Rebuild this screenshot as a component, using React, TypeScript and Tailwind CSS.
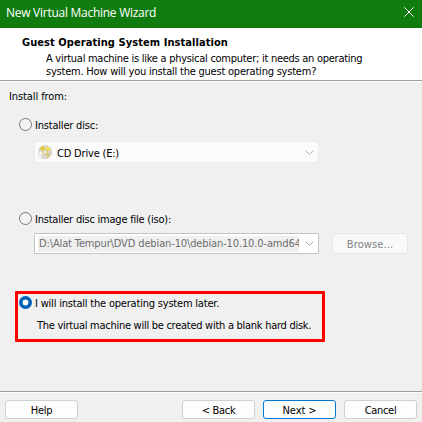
import type { ReactNode } from "react";

function Radio({ checked = false }: { checked?: boolean }) {
  return (
    <svg className="size-[13px] shrink-0" viewBox="0 0 13 13">
      {checked ? (
        <>
          <circle cx="6.5" cy="6.5" r="6.5" fill="#005fb8" />
          <circle cx="6.5" cy="6.5" r="2.9" fill="#fff" />
        </>
      ) : (
        <circle cx="6.5" cy="6.5" r="6" fill="#f3f3f3" stroke="#777" strokeWidth="1" />
      )}
    </svg>
  );
}

function Chevron({ color }: { color: string }) {
  return (
    <svg className="h-[5px] w-[9px] shrink-0" viewBox="0 0 9 5" fill="none" stroke={color}>
      <path d="M0.5 0.5 L4.5 4.3 L8.5 0.5" />
    </svg>
  );
}

function Disc() {
  return (
    <svg className="size-[14px] shrink-0" viewBox="0 0 14 14">
      <circle cx="7" cy="7" r="6.6" fill="#d8d8d8" stroke="#c4c4c4" strokeWidth="0.6" />
      <path d="M7 7 L1.6 4 A6.2 6.2 0 0 1 6.2 0.8 Z" fill="#e3c840" />
      <path d="M7 7 L8.5 0.9 A6.2 6.2 0 0 1 13 5.5 Z" fill="#efdc62" />
      <path d="M7 7 L12.8 8.4 A6.2 6.2 0 0 1 8.6 13 Z" fill="#d9ca86" />
      <path d="M7 7 L1 6.2 A6.2 6.2 0 0 0 2.8 11.5 Z" fill="#f3f3f3" />
      <circle cx="7" cy="7" r="2.5" fill="#f8f8f8" stroke="#d1b83d" strokeWidth="0.9" />
      <circle cx="7" cy="7" r="0.9" fill="#c9c9c9" />
      <path d="M0.5 9 h3.5 v4.5 h-3 z" fill="#e9e9e9" />
    </svg>
  );
}

function Button({ children, className = "border-[#d0d0d0]" }: { children: ReactNode; className?: string }) {
  return (
    <button className={`flex h-[19px] w-[73px] justify-center rounded-[3px] border bg-[#fdfdfd] pt-[3px] leading-[13px] ${className}`}>
      {children}
    </button>
  );
}

export default function App() {
  return (
    <div className="flex h-[422px] w-[422px] flex-col overflow-hidden whitespace-pre bg-[#f0f0f0] font-['DejaVu_Sans_Condensed','DejaVu_Sans',sans-serif] text-[11px] leading-[13px] text-black">
      <header className="flex h-[28px] shrink-0 justify-between bg-[#107c10] pl-[6px] pr-[8px] text-white">
        <h1 className="pt-[4px] font-['Open_Sans',sans-serif] text-[12px] leading-[17px] tracking-[-0.27px]">New Virtual Machine Wizard</h1>
        <svg className="mt-[7px] size-[10px]" viewBox="0 0 10 10" stroke="#fff" strokeWidth="1">
          <path d="M0.3 0.3 L9.7 9.7 M9.7 0.3 L0.3 9.7" />
        </svg>
      </header>

      <section className="h-[54px] shrink-0 border-b border-white bg-white">
        <div className="h-[53px] border-b border-[#a0a0a0] pl-[22px] pt-[8px]">
          <h2 className="font-bold tracking-[0.07px]">Guest Operating System Installation</h2>
          <div className="pl-[24px] pt-[3px]">
            <p className="tracking-[-0.27px]">A virtual machine is like a physical computer; it needs an operating</p>
            <p className="tracking-[-0.22px]">system. How will you install the guest operating system?</p>
          </div>
        </div>
      </section>

      <main className="flex h-[309px] shrink-0 flex-col pt-[8px]">
        <p className="pl-[9px] tracking-[-0.1px]">Install from:</p>
        <label className="mt-[15px] flex h-[14px] gap-[3px] pl-[19px]">
          <Radio />
          <span className="pt-[1px] tracking-[-0.2px]">Installer disc:</span>
        </label>
        <div className="ml-[34px] mt-[9px] flex h-[22px] w-[285px] items-center border border-[#ebebeb] bg-[#fbfbfb] pl-[3px] pr-[4px]">
          <Disc />
          <span className="ml-[5px] flex-1 pt-[2px] tracking-[-0.19px]">CD Drive (E:)</span>
          <Chevron color="#b4b4b4" />
        </div>

        <label className="mt-[49px] flex h-[14px] gap-[3px] pl-[19px]">
          <Radio />
          <span className="pt-[1px] tracking-[-0.22px]">Installer disc image file (iso):</span>
        </label>
        <div className="ml-[34px] mt-[7px] flex h-[21px] gap-[13px]">
          <div className="flex w-[285px] items-center rounded-[1px] border border-[#c4c4c4] bg-white pl-[3px] pr-[4px] text-[#6d6d6d]">
            <div className="h-[16px] w-[261px] overflow-hidden bg-[#f0f0f0] pl-[1px] pt-[1px] tracking-[-0.13px]">{"D:\\Alat Tempur\\DVD debian-10\\debian-10.10.0-amd64"}</div>
            <div className="flex flex-1 justify-end">
              <Chevron color="#a6a6a6" />
            </div>
          </div>
          <button className="flex w-[76px] justify-center rounded-[3px] border border-[#e6e6e6] bg-[#f9f9f9] pt-[4px] tracking-[0.1px] text-[#838383]">Browse...</button>
        </div>

        <div className="ml-[15px] mt-[37px] h-[51px] w-[310px] rounded-[1px] border-[3px] border-[#ff0000] pl-[1px] pt-[2px]">
          <label className="flex gap-[3px]">
            <Radio checked />
            <span className="pt-[1px] tracking-[-0.2px]">I will install the operating system later.</span>
          </label>
          <p className="pl-[18px] pt-[9px] tracking-[-0.27px]">The virtual machine will be created with a blank hard disk.</p>
        </div>
      </main>

      <footer className="flex flex-1 flex-col border-t border-[#a0a0a0]">
        <div className="flex flex-1 border-t border-white pl-[5px] pr-[5px] pt-[7px] tracking-[-0.3px]">
          <Button>Help</Button>
          <div className="ml-auto flex gap-[8px]">
            <Button>{"< Back"}</Button>
            <Button className="border-[#0078d4] tracking-[-0.1px]">{"Next >"}</Button>
            <Button>Cancel</Button>
          </div>
        </div>
      </footer>
    </div>
  );
}
